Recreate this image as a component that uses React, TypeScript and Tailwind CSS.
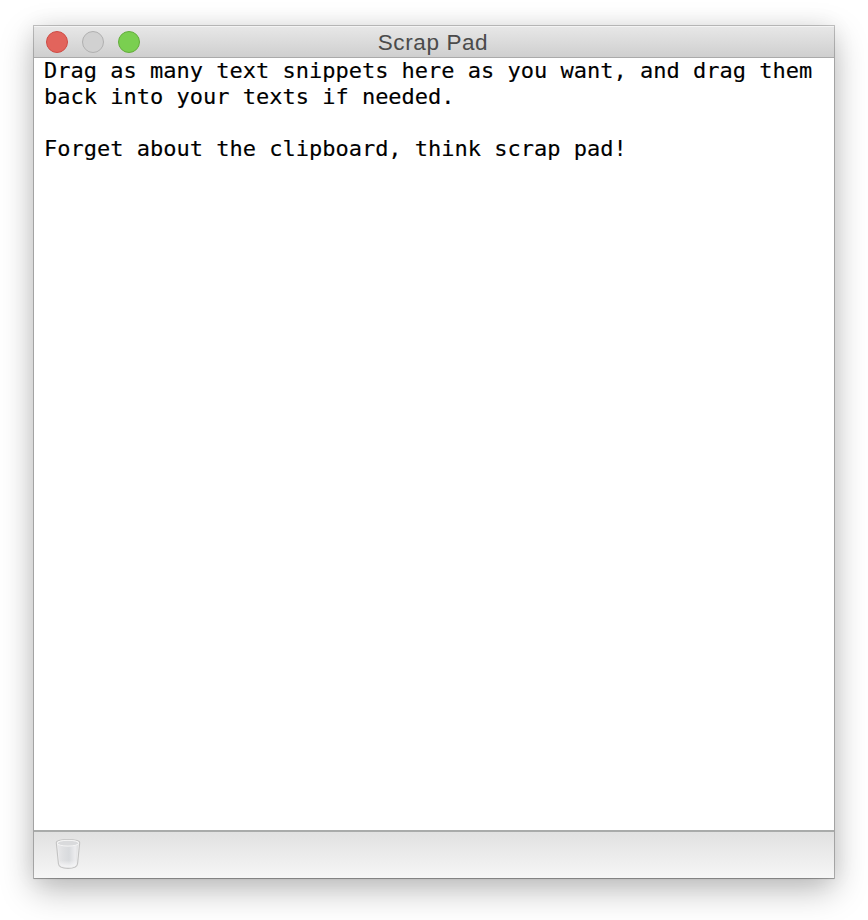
const lights = [
  'border-[#ce4c45] bg-[#e2645c]',
  'border-[#b0b0b0] bg-[#d1d1d1]',
  'border-[#63ad3c] bg-[#7acf50]',
];

function TrashIcon() {
  return (
    <svg width="28" height="32" viewBox="0 0 28 32" aria-hidden="true">
      <defs>
        <linearGradient id="glass" x1="0" x2="1" y1="0" y2="0">
          <stop offset="0" stopColor="#e8e8ea" />
          <stop offset="0.25" stopColor="#dfe0e2" />
          <stop offset="0.55" stopColor="#d8dadd" />
          <stop offset="0.85" stopColor="#ececee" />
          <stop offset="1" stopColor="#dedfe0" />
        </linearGradient>
        <linearGradient id="base" x1="0" x2="0" y1="0" y2="1">
          <stop offset="0.7" stopColor="#f7f7f8" stopOpacity="0" />
          <stop offset="0.95" stopColor="#f7f7f8" stopOpacity="0.8" />
        </linearGradient>
      </defs>
      <path
        d="M2.300 4.600C2.300 2.500 7 1.500 14 1.500s11.700 1 11.700 3.100L23.600 25.500C23.300 29 19.500 30.400 14 30.400S4.700 29 4.400 25.500Z"
        fill="#f0f0f0"
        stroke="#c3c3c3"
        strokeWidth="1.100"
      />
      <path d="M3.700 6 5.500 25.200C5.800 28.300 9 29.200 14 29.200s8.200-.9 8.500-4L24.300 6Z" fill="url(#glass)" />
      <path d="M3.700 6 5.500 25.200C5.800 28.300 9 29.200 14 29.200s8.200-.9 8.500-4L24.300 6Z" fill="url(#base)" />
      <ellipse cx="14" cy="5.200" rx="10.700" ry="2.900" fill="#d9dadc" stroke="#f5f5f5" strokeWidth="1" />
    </svg>
  );
}

export default function App() {
  return (
    <div className="h-[920px] w-[868px] overflow-hidden bg-white px-[34px] pt-[26px]">
      <main className="flex h-[852px] w-[800px] flex-col bg-white shadow-[0_0_0_1px_rgba(0,0,0,0.22),0_1px_1px_rgba(0,0,0,0.14),0_12px_32px_rgba(0,0,0,0.27),0_0_22px_rgba(0,0,0,0.07)]">
        <header className="grid h-8 shrink-0 grid-cols-[1fr_auto_1fr] items-center border-t border-b border-t-[#f4f4f4] border-b-[#aaaaaa] bg-linear-to-b from-[#e7e7e7] to-[#cfcfcf]">
          <div className="flex gap-3.5 pl-3">
            {lights.map((color) => (
              <span key={color} className={`size-[22px] rounded-full border ${color}`} />
            ))}
          </div>
          <h1 className="pt-0.5 pr-0.5 font-['Liberation_Sans',sans-serif] text-[22.500px] leading-[28px] tracking-[0.6px] whitespace-nowrap text-[#4b4b4b]">
            Scrap Pad
          </h1>
        </header>
        <section className="flex-1 pl-2.5 font-['DejaVu_Sans_Mono',monospace] text-[22px] leading-[26px] whitespace-pre text-black [-webkit-text-stroke:0.15px_black]">
          <p>Drag as many text snippets here as you want, and drag them</p>
          <p>back into your texts if needed.</p>
          <p className="mt-[26px]">Forget about the clipboard, think scrap pad!</p>
        </section>
        <footer className="flex h-12 shrink-0 items-center border-t-2 border-[#a9abaa] bg-linear-to-b from-[#e1e1e1] to-[#f6f6f6] pb-0.5 pl-5">
          <TrashIcon />
        </footer>
      </main>
    </div>
  );
}
